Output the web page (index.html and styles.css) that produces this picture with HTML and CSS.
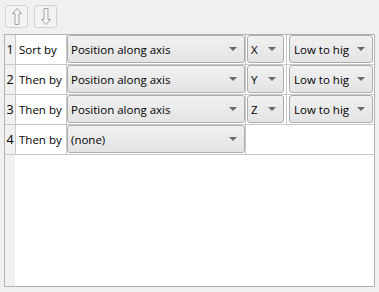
FILE: index.html
```html
<!DOCTYPE html>
<html lang="en">
<head>
  <meta charset="UTF-8">
  <title>Sort order</title>
  <link rel="stylesheet" href="styles.css">
</head>
<body>
  <!-- toolbar -->
  <div class="toolbar">
    <button class="tool" title="Move up">
      <svg width="10" height="17" viewBox="0 0 10 17"><path d="M5 0.5 L9.5 5.5 H7 V16.5 H3 V5.5 H0.5 Z" fill="#f6f6f6" stroke="#a3a3a3" stroke-width="1"/></svg>
    </button>
    <button class="tool" title="Move down">
      <svg width="10" height="17" viewBox="0 0 10 17"><path d="M5 16.5 L9.5 11.5 H7 V0.5 H3 V11.5 H0.5 Z" fill="#f6f6f6" stroke="#a3a3a3" stroke-width="1"/></svg>
    </button>
  </div>

  <!-- sort criteria -->
  <div class="grid">
    <div class="rows">
      <div class="num">1</div>
      <div class="label">Sort by</div>
      <div class="cell"><div class="combo wide"><span>Position along axis</span><i class="arrow"></i></div></div>
      <div class="cell"><div class="combo axis"><span>X</span><i class="arrow"></i></div></div>
      <div class="cell last"><div class="combo order"><span>Low to hig</span><i class="arrow"></i></div></div>

      <div class="num">2</div>
      <div class="label">Then by</div>
      <div class="cell"><div class="combo wide"><span>Position along axis</span><i class="arrow"></i></div></div>
      <div class="cell"><div class="combo axis"><span>Y</span><i class="arrow"></i></div></div>
      <div class="cell last"><div class="combo order"><span>Low to hig</span><i class="arrow"></i></div></div>

      <div class="num">3</div>
      <div class="label">Then by</div>
      <div class="cell"><div class="combo wide"><span>Position along axis</span><i class="arrow"></i></div></div>
      <div class="cell"><div class="combo axis"><span>Z</span><i class="arrow"></i></div></div>
      <div class="cell last"><div class="combo order"><span>Low to hig</span><i class="arrow"></i></div></div>

      <div class="num">4</div>
      <div class="label">Then by</div>
      <div class="cell"><div class="combo wide"><span>(none)</span><i class="arrow"></i></div></div>
      <div class="cell last span2"></div>
    </div>
    <div class="rest">
      <div class="rest-num"></div>
    </div>
  </div>
</body>
</html>
```

FILE: styles.css
```css
body {
  margin: 0;
  background: #f0f0f0;
  font-family: "Open Sans", "Noto Sans", sans-serif;
  font-size: 11.5px;
  color: #000;
}

.toolbar {
  display: flex;
  gap: 6px;
  padding: 5px 0 0 5px;
  height: 29px;
  box-sizing: border-box;
}

.tool {
  width: 23px;
  height: 23px;
  padding: 0;
  border: 1px solid #d2d2d2;
  border-radius: 3px;
  background: #f2f2f2;
  display: flex;
  align-items: center;
  justify-content: center;
}

.grid {
  margin: 5px 0 0 4px;
  width: 371px;
  height: 253px;
  box-sizing: border-box;
  border: 1px solid #b2b2b2;
  background: #fff;
  display: flex;
  flex-direction: column;
}

.rows {
  display: grid;
  grid-template-columns: 11px 51px 179px 41px 87px;
  grid-auto-rows: 30px;
}

.rows > div {
  box-sizing: border-box;
  border-right: 1px solid #c8c8c8;
  border-bottom: 1px solid #c8c8c8;
}

.rows > .last {
  border-right: none;
}

.span2 {
  grid-column: span 2;
}

.num {
  background: #f0f0f0;
  text-align: center;
  font-size: 12.5px;
  line-height: 29px;
}

.label {
  padding-left: 3px;
  line-height: 29px;
  white-space: nowrap;
}

.combo {
  height: 28px;
  box-sizing: border-box;
  border: 1px solid #acacac;
  border-radius: 3px;
  background: linear-gradient(#f1f1f1, #e4e4e4);
  display: flex;
  align-items: center;
  padding-left: 3px;
  overflow: hidden;
  white-space: nowrap;
}

.combo span {
  flex: 1;
  overflow: hidden;
}

.wide {
  width: 178px;
}

.axis {
  width: 37px;
  margin-left: 1px;
}

.order {
  width: 84px;
  margin-left: 2px;
}

.order span {
  padding-left: 1px;
}

.arrow {
  width: 0;
  height: 0;
  border-left: 4px solid transparent;
  border-right: 4px solid transparent;
  border-top: 4px solid #6a6a6a;
  margin: 0 7px 0 5px;
  flex: none;
}

.rest {
  flex: 1;
  display: flex;
}

.rest-num {
  width: 10px;
  background: #f0f0f0;
}
```
